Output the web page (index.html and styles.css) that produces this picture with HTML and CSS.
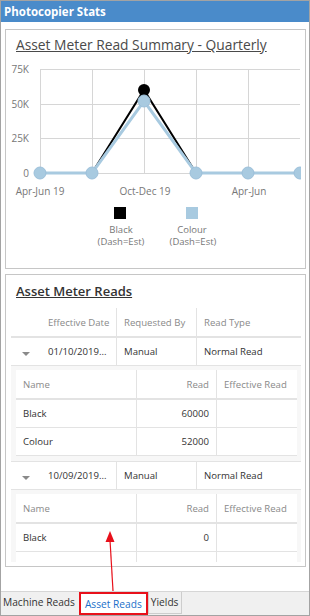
FILE: index.html
```html
<!DOCTYPE html>
<html lang="en">
<head>
  <meta charset="UTF-8">
  <meta name="viewport" content="width=device-width, initial-scale=1.0">
  <title>Photocopier Stats</title>
  <link rel="stylesheet" href="styles.css">
</head>
<body>
  <div class="window">
    <div class="titlebar">Photocopier Stats</div>

    <div class="content">
      <section class="panel chart-panel">
        <h2 class="panel-title">Asset Meter Read Summary - Quarterly</h2>
        <svg class="chart" width="299" height="208" viewBox="6 60 299 208">
          <defs>
            <clipPath id="plot-clip">
              <rect x="6" y="60" width="295" height="130"></rect>
            </clipPath>
          </defs>
          <g class="grid-lines">
            <line x1="40" y1="70.5" x2="300" y2="70.5"></line>
            <line x1="40" y1="105.5" x2="300" y2="105.5"></line>
            <line x1="40" y1="139.5" x2="300" y2="139.5"></line>
            <line x1="40" y1="174.5" x2="300" y2="174.5"></line>
            <line x1="40.5" y1="70" x2="40.5" y2="175"></line>
            <line x1="92.5" y1="70" x2="92.5" y2="175"></line>
            <line x1="144.5" y1="70" x2="144.5" y2="175"></line>
            <line x1="196.5" y1="70" x2="196.5" y2="175"></line>
            <line x1="248.5" y1="70" x2="248.5" y2="175"></line>
          </g>
          <g class="axis-label y-label">
            <text x="29" y="74">75K</text>
            <text x="29" y="109">50K</text>
            <text x="29" y="143">25K</text>
            <text x="29" y="178">0</text>
          </g>
          <g class="axis-label x-label">
            <text x="40" y="196">Apr-Jun 19</text>
            <text x="145" y="196">Oct-Dec 19</text>
            <text x="249" y="196">Apr-Jun</text>
          </g>
          <g clip-path="url(#plot-clip)">
            <polyline class="series-black" points="92,174 144,91 196,174"></polyline>
            <circle class="dot-black" cx="144" cy="91" r="6"></circle>
            <polyline class="series-colour" points="40,174 92,174 144,102 196,174 248,174 300,174"></polyline>
            <circle class="dot-colour" cx="40" cy="174" r="6"></circle>
            <circle class="dot-colour" cx="92" cy="174" r="6"></circle>
            <circle class="dot-colour" cx="144" cy="102" r="6"></circle>
            <circle class="dot-colour" cx="196" cy="174" r="6"></circle>
            <circle class="dot-colour" cx="248" cy="174" r="6"></circle>
            <circle class="dot-colour" cx="300" cy="174" r="6"></circle>
          </g>
          <g class="legend">
            <rect x="114" y="208" width="12" height="12" fill="#000"></rect>
            <text x="121" y="234">Black</text>
            <text x="121" y="246">(Dash=Est)</text>
            <rect x="186" y="208" width="12" height="12" fill="#a8cae0"></rect>
            <text x="192" y="234">Colour</text>
            <text x="193" y="246">(Dash=Est)</text>
          </g>
        </svg>
      </section>

      <section class="panel reads-panel">
        <h2 class="panel-title strong">Asset Meter Reads</h2>
        <div class="grid-view">
          <div class="grid-row grid-head">
            <div class="cell date">Effective Date</div>
            <div class="cell">Requested By</div>
            <div class="cell last">Read Type</div>
          </div>

          <div class="grid-row">
            <div class="cell date"><span class="expander"></span>01/10/2019...</div>
            <div class="cell">Manual</div>
            <div class="cell last">Normal Read</div>
          </div>
          <div class="detail">
            <div class="sub-table">
              <div class="sub-row sub-head">
                <div class="cell">Name</div>
                <div class="cell num">Read</div>
                <div class="cell last">Effective Read</div>
              </div>
              <div class="sub-row">
                <div class="cell">Black</div>
                <div class="cell num">60000</div>
                <div class="cell last"></div>
              </div>
              <div class="sub-row">
                <div class="cell">Colour</div>
                <div class="cell num">52000</div>
                <div class="cell last"></div>
              </div>
            </div>
          </div>

          <div class="grid-row">
            <div class="cell date"><span class="expander"></span>10/09/2019...</div>
            <div class="cell">Manual</div>
            <div class="cell last">Normal Read</div>
          </div>
          <div class="detail">
            <div class="sub-table">
              <div class="sub-row sub-head">
                <div class="cell">Name</div>
                <div class="cell num">Read</div>
                <div class="cell last">Effective Read</div>
              </div>
              <div class="sub-row">
                <div class="cell">Black</div>
                <div class="cell num">0</div>
                <div class="cell last"></div>
              </div>
              <div class="sub-row">
                <div class="cell"></div>
                <div class="cell num"></div>
                <div class="cell last"></div>
              </div>
            </div>
          </div>
        </div>
      </section>
    </div>

    <div class="tabs">
      <div class="tab">Machine Reads</div>
      <div class="tab active">Asset Reads</div>
      <div class="tab boxed">Yields</div>
    </div>

    <svg class="callout" width="20" height="70" viewBox="100 528 20 70">
      <line x1="113" y1="591" x2="110" y2="540" stroke="#e8101a" stroke-width="1.2"></line>
      <polygon points="110,531 105.5,542 114.5,542" fill="#e8101a"></polygon>
    </svg>
  </div>
</body>
</html>
```

FILE: styles.css
```css
* {
  margin: 0;
  padding: 0;
  box-sizing: border-box;
}

body {
  font-family: 'Segoe UI', 'Open Sans', sans-serif;
  background: #fff;
  color: #333;
}

.window {
  position: relative;
  width: 310px;
  height: 616px;
  border: 1px solid #a3a3a3;
  display: flex;
  flex-direction: column;
  background: #fff;
}

.titlebar {
  height: 21px;
  background: #4a8bca;
  color: #fff;
  font-size: 11.5px;
  font-weight: 700;
  line-height: 21px;
  padding-left: 3px;
}

.content {
  flex: 1;
  padding: 7px 3px 0 4px;
}

.panel {
  border: 1px solid #c6c6c6;
  background: #fff;
}

.chart-panel {
  height: 240px;
  margin-bottom: 5px;
}

.reads-panel {
  height: 293px;
}

.panel-title {
  font-size: 13.8px;
  font-weight: 400;
  color: #4a4a4a;
  text-decoration: underline;
  line-height: 20px;
  padding: 5px 0 4px 10px;
  height: 29px;
  white-space: nowrap;
}

.panel-title.strong {
  font-size: 13px;
  font-weight: 600;
  color: #333;
  padding-top: 6px;
  height: 33px;
}

.chart {
  display: block;
}

.grid-lines line {
  stroke: #d6d6d6;
  stroke-width: 1;
}

.axis-label text,
.legend text {
  font-family: 'Segoe UI', 'Open Sans', sans-serif;
  font-size: 10px;
  fill: #777;
}

.legend text {
  font-size: 9.5px;
}

.y-label text {
  text-anchor: end;
}

.x-label text,
.legend text {
  text-anchor: middle;
}

.series-black {
  fill: none;
  stroke: #000;
  stroke-width: 2;
}

.dot-black {
  fill: #000;
}

.series-colour {
  fill: none;
  stroke: #a8cae0;
  stroke-width: 3;
}

.dot-colour {
  fill: #a8cae0;
  stroke: #9cc0da;
  stroke-width: 1;
}

/* grid */

.grid-view {
  height: 254px;
  margin: 0 4px 0 5px;
  overflow: hidden;
  font-size: 9.6px;
}

.grid-row {
  display: grid;
  grid-template-columns: 106px 80px 1fr;
  height: 28px;
  border-bottom: 1px solid #e3e3e3;
  background: #fff;
}

.grid-row.grid-head {
  height: 30px;
  border-bottom: 2px solid #e3e3e3;
  color: #8a8a8a;
}

.cell {
  display: flex;
  align-items: center;
  padding: 0 7px;
  border-right: 1px solid #e3e3e3;
  white-space: nowrap;
  overflow: hidden;
}

.cell.last {
  border-right: none;
}

.cell.date {
  padding-left: 37px;
  position: relative;
}

.expander {
  position: absolute;
  left: 11px;
  top: 14px;
  width: 0;
  height: 0;
  border-left: 4px solid transparent;
  border-right: 4px solid transparent;
  border-top: 4px solid #8a8a8a;
}

.detail {
  background: #f7f7f7;
  padding: 4px 4px 5px 5px;
  border-bottom: 1px solid #e3e3e3;
}

.sub-table {
  background: #fff;
}

.sub-row {
  display: grid;
  grid-template-columns: 121px 80px 1fr;
  height: 28px;
  border-bottom: 1px solid #e3e3e3;
}

.sub-row.sub-head {
  height: 30px;
  border-bottom: 2px solid #e3e3e3;
  color: #8a8a8a;
}

.cell.num {
  justify-content: flex-end;
}

/* tabs */

.tabs {
  height: 24px;
  border-top: 1px solid #d6d6d6;
  background: #f0f0f0;
  display: flex;
  font-size: 10.2px;
  color: #333;
}

.tab {
  padding: 0 2px;
  line-height: 21px;
  white-space: nowrap;
}

.tab.active {
  background: #fff;
  color: #1a6fc9;
  border: 2px solid #e8101a;
  padding: 0 4px;
  margin-left: 2px;
}

.tab.boxed {
  border: 1px solid #cdcdcd;
  border-top: none;
  margin-bottom: 1px;
  padding: 0 3px 0 2px;
}

.callout {
  position: absolute;
  left: 99px;
  top: 527px;
  pointer-events: none;
}
```
